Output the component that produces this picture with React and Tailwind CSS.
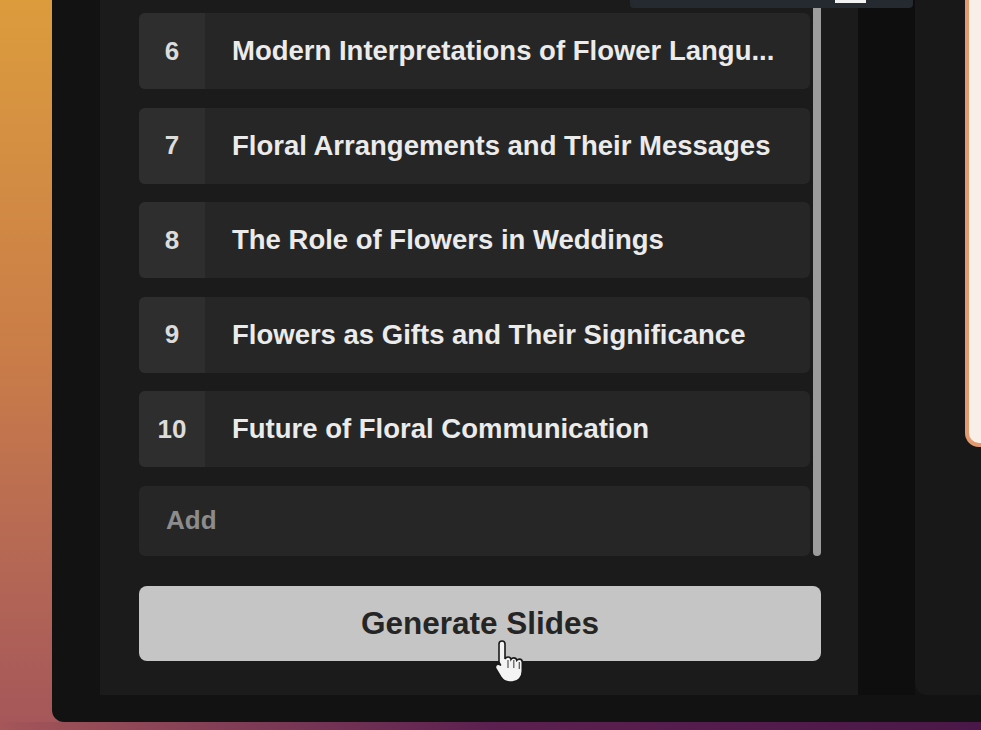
const slides = [
  { n: 6, title: "Modern Interpretations of Flower Langu..." },
  { n: 7, title: "Floral Arrangements and Their Messages" },
  { n: 8, title: "The Role of Flowers in Weddings" },
  { n: 9, title: "Flowers as Gifts and Their Significance" },
  { n: 10, title: "Future of Floral Communication" },
];

function HandCursor() {
  return (
    <svg width="30" height="48" viewBox="0 0 30 48" className="absolute left-[494px] top-[638px]">
      <path
        d="M8 3c1.8 0 3 1.3 3 3v15c.6-1.3 1.8-2 3-2 1.6 0 2.8 1 3 2.4.6-1 1.6-1.5 2.8-1.5 1.5 0 2.7 1 3 2.4.6-.8 1.5-1.2 2.5-1.2 1.7 0 3 1.4 3 3.2V33c0 6-4 11-10 11h-3c-4 0-6.5-2-8.5-5L2 31c-1-1.5-.6-3.4.8-4.3 1.4-.9 3-.5 4 .8L5 24V6c0-1.7 1.3-3 3-3z"
        fill="#f4f4f4"
        stroke="#1a1a1a"
        strokeWidth="1.6"
      />
      <path d="M14 22v8M19.8 22v8M25.3 24v7" stroke="#555" strokeWidth="1.2" fill="none" />
    </svg>
  );
}

function SlideRow({ n, title }) {
  return (
    <div className="flex h-[76px] shrink-0 rounded-md overflow-hidden bg-[#262626]">
      <div className="w-[66px] shrink-0 bg-[#2e2e2e] flex items-center justify-center text-[26px] font-bold text-[#dcdcdc]">
        {n}
      </div>
      <div className="flex-1 min-w-0 flex items-center pl-[27px] pr-[20px]">
        <span className="whitespace-nowrap text-[27.5px] font-bold text-[#ebebeb]">{title}</span>
      </div>
    </div>
  );
}

export default function App() {
  return (
    <div
      className="relative w-[981px] h-[730px] overflow-hidden flex flex-col"
      style={{ fontFamily: '"Liberation Sans", Arial, sans-serif' }}
    >
      <div className="flex h-[722px] shrink-0 bg-gradient-to-b from-[#dc9c3c] via-[#c97c48] to-[#a5575a]">
        <div className="w-[52px] shrink-0" />
        <div className="flex-1 bg-[#121212] rounded-bl-[12px] flex flex-col">
          <div className="flex h-[695px]">
            <div className="w-[48px] shrink-0" />
            <div className="w-[758px] shrink-0 bg-[#1b1b1b] pl-[39px] pr-[37px] flex flex-col">
              <div className="flex gap-[3px]">
                <div className="flex-1 min-w-0 pt-[13px] flex flex-col gap-[18.5px]">
                  {slides.map((s) => (
                    <SlideRow key={s.n} {...s} />
                  ))}
                  <div className="h-[70px] rounded-md bg-[#262626] flex items-center pl-[27px] text-[26px] font-bold text-[#8c8c8c]">
                    Add
                  </div>
                </div>
                <div className="w-[8px] shrink-0 bg-[#9c9c9c] rounded-b-full" />
              </div>
              <button className="mt-[30.5px] h-[75px] w-full rounded-lg bg-[#c5c5c5] text-[31.5px] font-bold text-[#252525]">
                Generate Slides
              </button>
            </div>
            <div className="w-[57px] shrink-0 bg-[#0e0e0e]" />
            <div className="flex-1 bg-[#181818] rounded-bl-[12px] pl-[50px]">
              <div className="h-[447px] rounded-bl-[14px] border-l-[4px] border-b-[4px] border-[#e39a6c] bg-[#f8efe9]" />
            </div>
          </div>
        </div>
      </div>
      <div className="h-[8px] bg-gradient-to-r from-[#a45658] via-[#5c2050] to-[#4a1848]" />

      <div className="absolute left-[630px] top-0 w-[283px] h-[8px] bg-[#252a31] rounded-b-sm">
        <div className="absolute left-[205px] top-0 w-[31px] h-[3px] bg-[#f2f2f2]" />
      </div>
      <HandCursor />
    </div>
  );
}
